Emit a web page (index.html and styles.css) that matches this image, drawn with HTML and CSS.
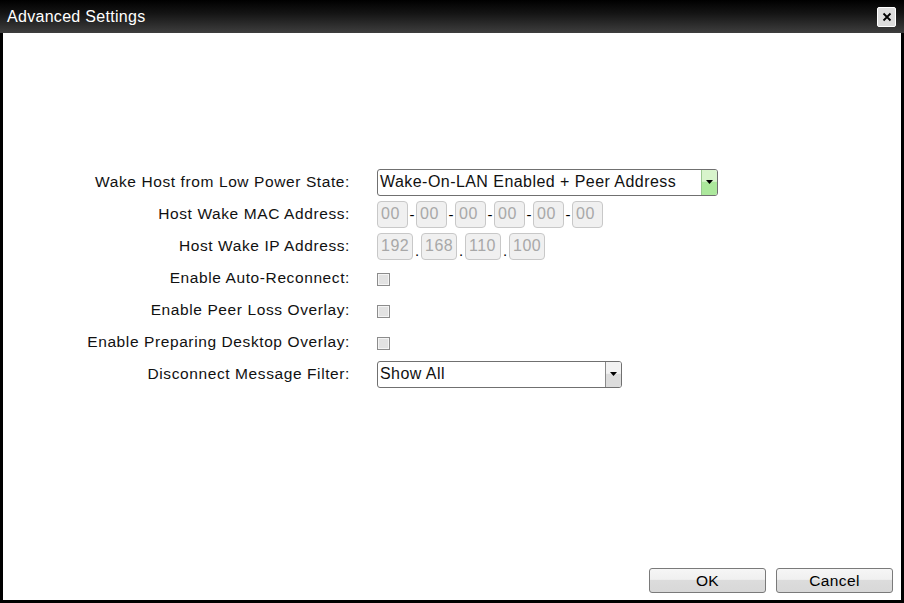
FILE: index.html
```html
<!DOCTYPE html>
<html>
<head>
<meta charset="utf-8">
<link rel="stylesheet" href="styles.css">
</head>
<body>
<div class="window">
  <div class="titlebar">
    <span class="title">Advanced Settings</span>
    <button class="close" aria-label="Close">
      <svg width="10" height="10" viewBox="0 0 10 10"><path d="M1.5 1.5 L8.5 8.5 M8.5 1.5 L1.5 8.5" stroke="#000" stroke-width="1.8"/></svg>
    </button>
  </div>
  <div class="content">
    <div class="form">
      <div class="label">Wake Host from Low Power State:</div>
      <div class="ctrl">
        <div class="select wide">
          <span class="value">Wake-On-LAN Enabled + Peer Address</span>
          <span class="arrow green"><svg width="7" height="4" viewBox="0 0 7 4"><path d="M0 0 H7 L3.5 4 Z" fill="#000"/></svg></span>
        </div>
      </div>

      <div class="label">Host Wake MAC Address:</div>
      <div class="ctrl">
        <span class="box mac">00</span><span class="sep">-</span>
        <span class="box mac">00</span><span class="sep">-</span>
        <span class="box mac">00</span><span class="sep">-</span>
        <span class="box mac">00</span><span class="sep">-</span>
        <span class="box mac">00</span><span class="sep">-</span>
        <span class="box mac">00</span>
      </div>

      <div class="label">Host Wake IP Address:</div>
      <div class="ctrl">
        <span class="box ip">192</span><span class="sep dot">.</span>
        <span class="box ip">168</span><span class="sep dot">.</span>
        <span class="box ip">110</span><span class="sep dot">.</span>
        <span class="box ip">100</span>
      </div>

      <div class="label">Enable Auto-Reconnect:</div>
      <div class="ctrl"><span class="check"></span></div>

      <div class="label">Enable Peer Loss Overlay:</div>
      <div class="ctrl"><span class="check"></span></div>

      <div class="label">Enable Preparing Desktop Overlay:</div>
      <div class="ctrl"><span class="check"></span></div>

      <div class="label">Disconnect Message Filter:</div>
      <div class="ctrl">
        <div class="select narrow">
          <span class="value">Show All</span>
          <span class="arrow"><svg width="7" height="4" viewBox="0 0 7 4"><path d="M0 0 H7 L3.5 4 Z" fill="#000"/></svg></span>
        </div>
      </div>
    </div>
    <div class="footer">
      <button class="btn">OK</button>
      <button class="btn">Cancel</button>
    </div>
  </div>
</div>
</body>
</html>
```
FILE: styles.css
```css
html, body {
  margin: 0;
  padding: 0;
  width: 904px;
  height: 603px;
  overflow: hidden;
  background: #fff;
  font-family: "Liberation Sans", Arial, sans-serif;
}
.window {
  width: 904px;
  height: 603px;
  box-sizing: border-box;
  display: flex;
  flex-direction: column;
  background: #000;
}
.titlebar {
  height: 33px;
  flex: none;
  background: linear-gradient(to bottom, #000 0%, #141414 40%, #3e3e3e 100%);
  display: flex;
  align-items: center;
  justify-content: space-between;
  padding: 0 8px 0 7px;
}
.title {
  color: #fff;
  font-size: 16px;
  letter-spacing: 0.3px;
}
.close {
  width: 19px;
  height: 20px;
  margin: 0;
  padding: 0;
  border: 1px solid #fff;
  border-radius: 2px;
  background: #dcdcdc;
  display: flex;
  align-items: center;
  justify-content: center;
}
.content {
  flex: 1;
  background: #fff;
  margin: 0 3px 3px 3px;
  display: flex;
  flex-direction: column;
  justify-content: space-between;
}
.form {
  display: grid;
  grid-template-columns: 347px auto;
  column-gap: 27px;
  grid-auto-rows: 32px;
  margin-top: 133px;
  font-size: 15.5px;
  color: #111;
}
.label {
  text-align: right;
  display: flex;
  align-items: center;
  justify-content: flex-end;
  letter-spacing: 0.6px;
}
.ctrl {
  display: flex;
  align-items: center;
}
.select {
  height: 27px;
  box-sizing: border-box;
  border: 1px solid #707070;
  border-radius: 3px;
  display: flex;
  align-items: stretch;
  background: #fff;
  overflow: hidden;
}
.select.wide { width: 341px; }
.select.narrow { width: 245px; }
.select .value {
  flex: 1;
  display: flex;
  align-items: center;
  padding-left: 2px;
  font-size: 16px;
  letter-spacing: 0.45px;
}
.arrow {
  width: 15px;
  border-left: 1px solid #8a8a8a;
  background: linear-gradient(to bottom, #f2f2f2 0%, #f2f2f2 45%, #dcdcdc 50%, #dcdcdc 100%);
  display: flex;
  align-items: center;
  justify-content: center;
}
.arrow.green {
  border-left: 1px solid #9ac890;
  background: linear-gradient(to bottom, #d8f4cc 0%, #d8f4cc 45%, #ace89c 50%, #ace89c 100%);
}
.box {
  height: 27px;
  box-sizing: border-box;
  border: 1px solid #c8c8c8;
  border-radius: 4px;
  background: #f0f0f0;
  color: #a8a8a8;
  display: inline-flex;
  align-items: center;
  padding-left: 3px;
  font-size: 16px;
  letter-spacing: 0.5px;
}
.box.mac { width: 31px; }
.box.ip { width: 36px; }
.sep {
  width: 8px;
  text-align: center;
  color: #000;
  font-size: 15px;
}
.sep.dot { align-self: center; padding-top: 8px; }
.check {
  width: 13px;
  height: 13px;
  box-sizing: border-box;
  border: 1px solid #8c8c8c;
  background: #e2e2e2;
  box-shadow: inset 0 0 0 1px #f4f4f4;
  margin-top: 2px;
}
.footer {
  display: flex;
  justify-content: flex-end;
  gap: 10px;
  padding: 0 8px 7px 0;
}
.btn {
  width: 117px;
  height: 25px;
  margin: 0;
  border: 1px solid #7a7a7a;
  border-radius: 3px;
  background: linear-gradient(to bottom, #f6f6f6 0%, #f0f0f0 45%, #dcdcdc 50%, #d8d8d8 100%);
  font-family: "Liberation Sans", Arial, sans-serif;
  font-size: 15.5px;
  letter-spacing: 0.4px;
  color: #000;
  padding: 0;
}
```
